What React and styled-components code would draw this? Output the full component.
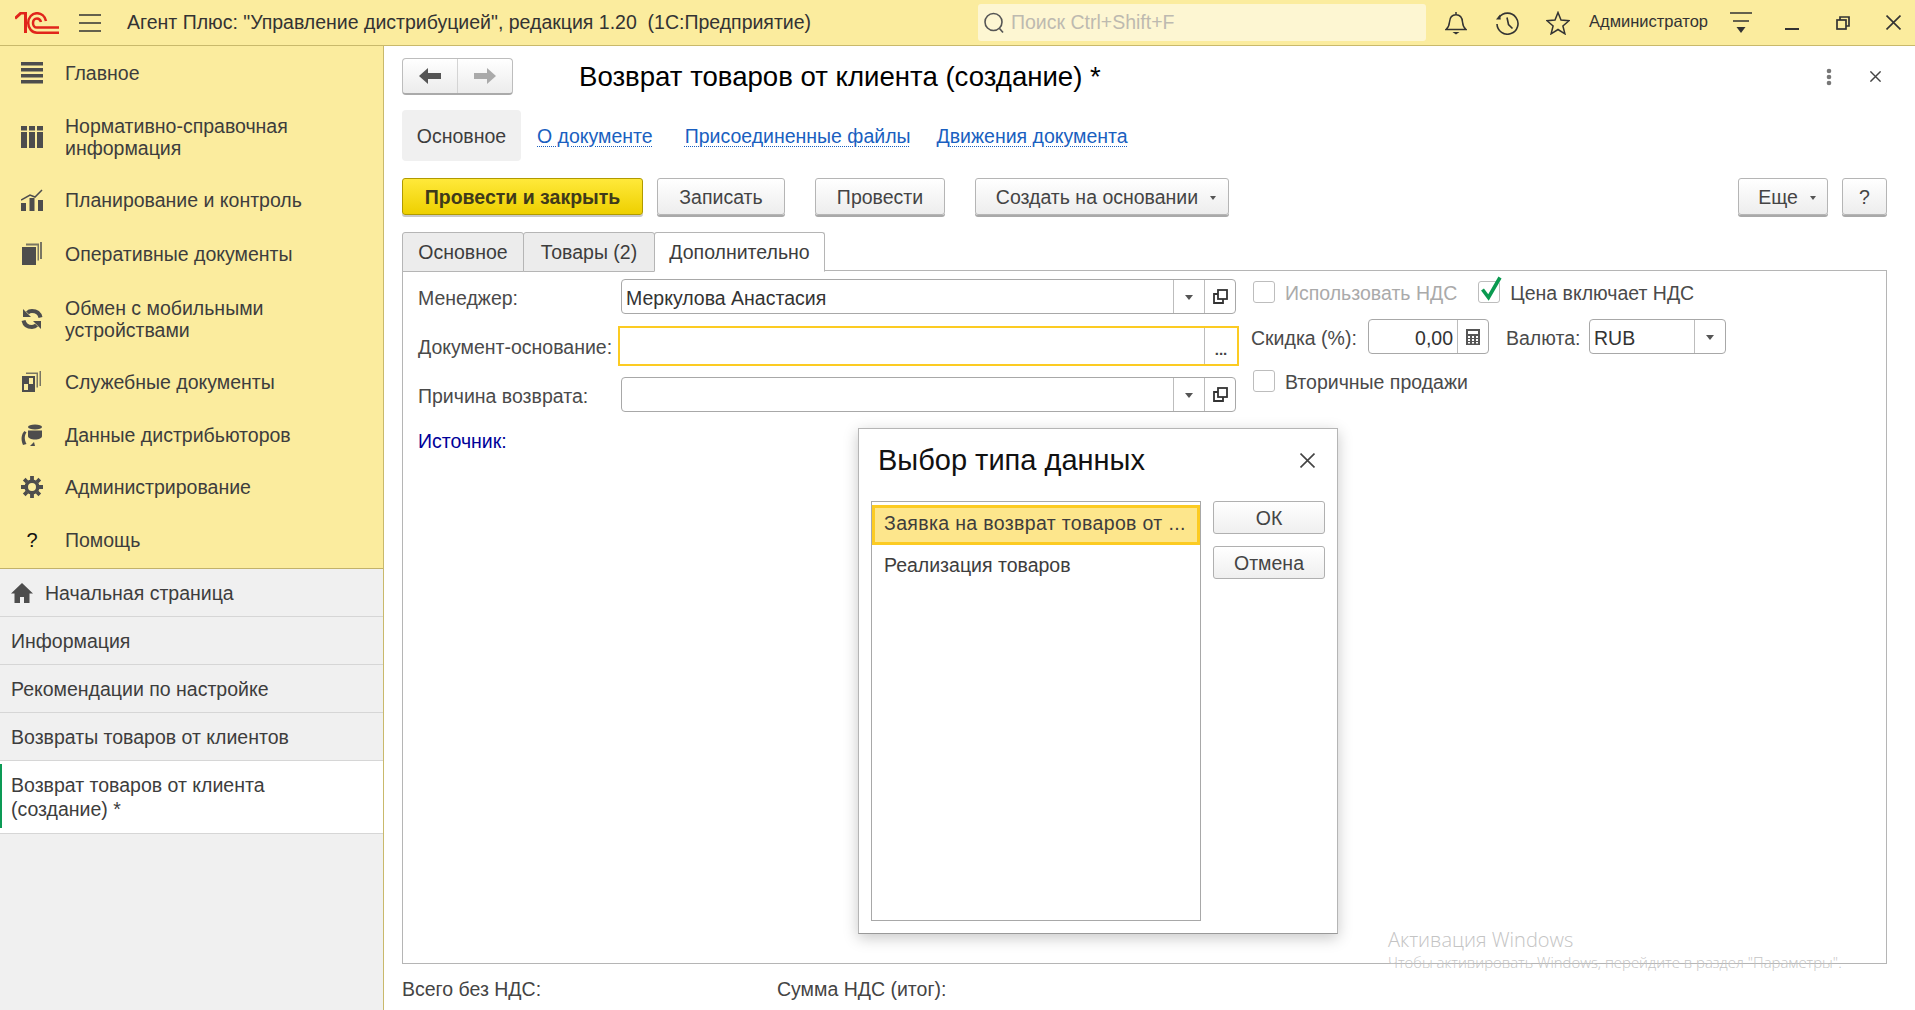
import React from 'react';
import styled, { createGlobalStyle } from 'styled-components';

const GlobalStyle = createGlobalStyle`
  html, body { margin: 0; padding: 0; height: 100%; background: #fff; overflow: hidden; }
  body { font-family: "Liberation Sans", Arial, sans-serif; font-size: 19.5px; color: #444; }
  #root { height: 100%; }
  * { box-sizing: border-box; }
`;

const Page = styled.div`
  position: relative;
  display: flex;
  flex-direction: column;
  width: 1915px;
  height: 1010px;
  overflow: hidden;
`;

const TopBar = styled.header`
  display: flex;
  align-items: center;
  height: 46px;
  flex: none;
  background: #fbec9e;
  border-bottom: 1px solid #c9b96b;
  color: #333;
  & > * { flex: none; }
`;

const LogoBox = styled.div`
  display: flex;
  width: 79px;
  padding-left: 15px;
`;

const BurgerBox = styled.div`
  display: flex;
  width: 48px;
`;

const AppTitle = styled.div`
  width: 851px;
  white-space: pre;
`;

const SearchBox = styled.div`
  display: flex;
  align-items: center;
  gap: 5px;
  width: 448px;
  height: 37px;
  padding-left: 4px;
  background: #fdf6d2;
  border-radius: 3px;
  color: #bdbab0;
`;

const TopIcons = styled.div`
  display: grid;
  grid-template-columns: repeat(3, 51px);
  justify-items: center;
  align-items: center;
  width: 163px;
  padding-left: 4px;
`;

const UserName = styled.div`
  width: 126px;
  font-size: 16.5px;
  margin-top: -3px;
`;

const WindowIcons = styled.div`
  display: grid;
  grid-template-columns: repeat(4, 51px);
  justify-items: center;
  align-items: center;
`;

const Body = styled.div`
  display: flex;
  flex: 1;
  min-height: 0;
`;

const Sidebar = styled.aside`
  display: flex;
  flex-direction: column;
  flex: none;
  width: 384px;
  background: #f0f0f0;
  border-right: 1px solid #c9b96b;
`;

const MainNav = styled.nav`
  height: 523px;
  padding-top: 1px;
  background: #fbec9e;
  border-bottom: 1px solid #c2b26a;
`;

const NavItem = styled.div`
  display: grid;
  grid-template-columns: 65px 1fr;
  align-items: center;
  padding: 15.3px 0;
  line-height: 22px;
  color: #3d3d3d;
`;

const NavIcon = styled.div`
  display: flex;
  justify-content: center;
  width: 64px;
  color: #4d4d4d;
`;

const OpenTab = styled.div`
  position: relative;
  display: flex;
  align-items: center;
  gap: 12px;
  height: ${(p) => (p.$active ? '73px' : '48px')};
  padding: 0 50px 0 11px;
  line-height: 24px;
  color: #3d3d3d;
  background: ${(p) => (p.$active ? '#fff' : 'transparent')};
  border-bottom: 1px solid #d6d6d6;

  ${(p) => p.$active && `
    &::before {
      content: '';
      position: absolute;
      left: 0;
      top: 3px;
      bottom: 5px;
      width: 2px;
      background: #0c9a55;
    }
  `}
`;

const Main = styled.main`
  display: flex;
  flex-direction: column;
  flex: 1;
  min-width: 0;
  padding: 12px 28px 0 18px;
`;

const HeaderRow = styled.div`
  display: flex;
  align-items: center;
  height: 37px;
`;

const NavButtons = styled.div`
  display: flex;
  width: 111px;
  height: 37px;
  background: linear-gradient(#fff, #ececec);
  border: 1px solid #bdbdbd;
  border-bottom: 2px solid #aaa;
  border-radius: 4px;
`;

const NavArrow = styled.div`
  display: flex;
  flex: 1;
  align-items: center;
  justify-content: center;
  & + & { border-left: 1px solid #d4d4d4; }
`;

const FormTitle = styled.h1`
  flex: 1;
  margin: 0 0 0 66px;
  font-size: 27.6px;
  font-weight: normal;
  color: #000;
`;

const HeaderTools = styled.div`
  display: flex;
  align-items: center;
  gap: 38px;
  padding-right: 6px;
`;

const SectionTabs = styled.div`
  display: flex;
  align-items: center;
  margin-top: 15px;
  height: 51px;
`;

const SectionTab = styled.div`
  display: flex;
  align-items: center;
  justify-content: center;
  width: 119px;
  height: 51px;
  padding-top: 2px;
  background: #f0f0f0;
  border-radius: 4px;
  color: #3d3d3d;
`;

const SectionLink = styled.a`
  margin-left: ${(p) => p.$gap}px;
  padding-top: 2px;
  color: #1a5fc0;
  text-decoration: underline dotted 1px;
  text-underline-offset: 3px;
`;

const CommandBar = styled.div`
  display: flex;
  align-items: flex-start;
  margin-top: 17px;
  height: 39px;
`;

const Button = styled.button`
  display: flex;
  align-items: center;
  justify-content: center;
  gap: 12px;
  width: ${(p) => p.$w}px;
  height: 37px;
  margin-left: ${(p) => p.$gap || 0}px;
  padding: 1px 0 0 ${(p) => (p.$menu ? 8 : 0)}px;
  font: inherit;
  color: #444;
  background: linear-gradient(#fff, #ededed);
  border: 1px solid #b5b5b5;
  border-radius: 3px;
  box-shadow: 0 2px 0 #a9a9a9;
`;

const PrimaryButton = styled(Button)`
  font-weight: bold;
  color: #3f3a1a;
  background: linear-gradient(#ffe93a, #eed000);
  border: 1px solid #b09a00;
  box-shadow: 0 2px 0 #c9c9c9;
`;

const Spacer = styled.div`
  flex: 1;
`;

const Caret = styled.span`
  width: 0;
  height: 0;
  margin-top: 2px;
  border-left: 4px solid transparent;
  border-right: 4px solid transparent;
  border-top: 5px solid #555;
`;

const SmallCaret = styled(Caret)`
  border-left-width: 3px;
  border-right-width: 3px;
  border-top-width: 4px;
`;

const PageTabs = styled.div`
  display: flex;
  margin-top: 15px;
  height: 39px;
  margin-bottom: -1px;
`;

const PageTab = styled.div`
  position: relative;
  display: flex;
  align-items: center;
  justify-content: center;
  width: ${(p) => p.$w}px;
  height: 40px;
  color: #3d3d3d;
  background: ${(p) => (p.$active ? '#fff' : '#ececec')};
  border: 1px solid #b5b5b5;
  border-bottom: ${(p) => (p.$active ? '1px solid #fff' : '1px solid #b5b5b5')};
  margin-left: ${(p) => (p.$first ? 0 : -1)}px;
  border-radius: 3px 3px 0 0;
  z-index: ${(p) => (p.$active ? 1 : 0)};
`;

const Panel = styled.section`
  display: flex;
  flex: 1;
  min-height: 0;
  gap: 13px;
  padding: 8px 0 0 15px;
  border: 1px solid #b5b5b5;
`;

const LeftForm = styled.div`
  display: flex;
  flex-direction: column;
  gap: 11px;
  width: 820px;
`;

const FormRow = styled.div`
  display: grid;
  grid-template-columns: 203px 615px;
  align-items: center;
  height: ${(p) => (p.$focused ? 40 : 35)}px;
  margin-top: ${(p) => (p.$focused ? 1 : 0)}px;
`;

const Label = styled.label`
  white-space: nowrap;
  color: #4a4a4a;
  width: ${(p) => (p.$w ? `${p.$w}px` : 'auto')};
  margin-left: ${(p) => p.$gap || 0}px;
  padding-top: ${(p) => (p.$tight ? 2 : 3)}px;
`;

const Field = styled.div`
  display: flex;
  align-items: stretch;
  width: ${(p) => (p.$w ? `${p.$w}px` : '100%')};
  height: 35px;
  background: #fff;
  border: 1px solid #a8a8a8;
  border-radius: 4px;
`;

const FocusField = styled(Field)`
  width: 621px;
  height: 40px;
  margin-left: -3px;
  border: 2px solid #fccb22;
  border-radius: 0;
`;

const FieldValue = styled.div`
  flex: 1;
  min-width: 0;
  padding: 2px 4px 0;
  line-height: 33px;
  color: #333;
  text-align: ${(p) => p.$align || 'left'};
`;

const FieldButton = styled.div`
  display: flex;
  flex: none;
  align-items: center;
  justify-content: center;
  width: ${(p) => p.$w || 31}px;
  border-left: 1px solid #bdbdbd;
  color: #444;
`;

const SourceLabel = styled.div`
  margin-top: 5px;
  padding-top: 2px;
  line-height: 23px;
  color: #000099;
`;

const RightForm = styled.div`
  display: flex;
  flex-direction: column;
  padding-top: 2px;
`;

const RightRow = styled.div`
  display: flex;
  align-items: center;
  height: ${(p) => p.$h}px;
  margin-top: ${(p) => p.$top || 0}px;
`;

const Check = styled.span`
  position: relative;
  flex: none;
  width: 22px;
  height: 22px;
  margin-left: ${(p) => p.$gap || 2}px;
  background: #fff;
  border: 1px solid #bdbdbd;
  border-radius: 3px;
`;

const CheckMark = styled.svg`
  position: absolute;
  left: 2px;
  top: -6px;
`;

const CheckText = styled.span`
  margin-left: 10px;
  padding-top: 2px;
  color: ${(p) => (p.$off ? '#aaa' : '#4a4a4a')};
  white-space: nowrap;
`;

const Footer = styled.footer`
  display: flex;
  align-items: center;
  flex: none;
  height: 46px;
  padding-top: 5px;
  color: #444;
`;

const FooterCell = styled.div`
  width: ${(p) => p.$w}px;
`;

const Dialog = styled.div`
  position: absolute;
  left: 858px;
  top: 428px;
  width: 480px;
  height: 506px;
  padding: 0 12px;
  background: #fff;
  border: 1px solid #b5b5b5;
  border-bottom-color: #999;
  box-shadow: 0 4px 14px rgba(0, 0, 0, 0.22);
`;

const DialogHead = styled.div`
  display: flex;
  align-items: center;
  justify-content: space-between;
  height: 72px;
  padding: 0 10px 10px 7px;
`;

const DialogTitle = styled.div`
  font-size: 29px;
  color: #111;
`;

const DialogBody = styled.div`
  display: flex;
  gap: 12px;
`;

const TypeList = styled.div`
  width: 331px;
  height: 420px;
  padding-top: 3px;
  border: 1px solid #a8a8a8;
`;

const TypeRow = styled.div`
  height: ${(p) => (p.$selected ? 40 : 42)}px;
  padding: 0 10px 0 ${(p) => (p.$selected ? 9 : 12)}px;
  line-height: ${(p) => (p.$selected ? 31 : 40)}px;
  letter-spacing: ${(p) => (p.$selected ? '0.35px' : '0')};
  color: #3d3d3d;
  background: ${(p) => (p.$selected ? '#fde68c' : 'transparent')};
  border: ${(p) => (p.$selected ? '3px solid #fccb22' : 'none')};
  white-space: pre;
`;

const DialogButtons = styled.div`
  display: flex;
  flex-direction: column;
  gap: 12px;
`;

const DialogButton = styled.button`
  width: 112px;
  height: 33px;
  padding: 2px 0 0;
  font: inherit;
  color: #444;
  background: linear-gradient(#fff, #efefef);
  border: 1px solid #b0b0b0;
  border-radius: 3px;
`;

const Watermark = styled.div`
  position: absolute;
  left: 1388px;
  top: 926px;
  font-family: "Open Sans", sans-serif;
  font-weight: 300;
  color: #c4c4c4;
  white-space: nowrap;
  pointer-events: none;
`;

const WatermarkTitle = styled.div`
  font-size: 20px;
  line-height: 28px;
`;

const WatermarkNote = styled.div`
  font-size: 14.9px;
  line-height: 20px;
  margin-top: -2px;
`;

const Logo = () => (
  <svg width="44" height="22" viewBox="0 0 44 22" fill="none" stroke="#e1251b" strokeWidth="2.500">
    <path d="M0 6.500L6 1h4.500v20" strokeWidth="3" />
    <path d="M31 9C30 4 26 1.2 22 1.2 17 1.2 13.2 5.500 13.2 11s3.800 9.700 8.800 9.700h22" />
    <path d="M26 10c-.6-2.300-2-3.600-4-3.600-2.600 0-4 2.300-4 4.600s1.400 4.600 4 4.600h22" />
  </svg>
);

const Burger = () => (
  <svg width="22" height="20" viewBox="0 0 22 20" stroke="#333" strokeWidth="1.5">
    <path d="M0 2h22M0 10h22M0 18h22" />
  </svg>
);

const Magnifier = () => (
  <svg width="24" height="26" viewBox="0 0 24 26" fill="none" stroke="#555" strokeWidth="1.6">
    <circle cx="11.500" cy="12" r="8.500" />
    <path d="M17.500 18.500l3.500 4" />
  </svg>
);

const Bell = () => (
  <svg width="22" height="24" viewBox="0 0 22 24" fill="none" stroke="#333" strokeWidth="1.5">
    <path d="M1 18.500c2.500-2 3.200-4 3.500-7.500C4.800 6.500 7 3.700 11 3.700s6.200 2.800 6.500 7.300c.3 3.500 1 5.500 3.500 7.500z" />
    <path d="M11 1v2.500" />
    <path d="M7.500 21h7l-3.500 2.500z" fill="#333" stroke="none" />
  </svg>
);

const History = () => (
  <svg width="24" height="24" viewBox="0 0 24 24" fill="none" stroke="#333" strokeWidth="1.6">
    <path d="M4 6.500A10.500 10.500 0 1 1 2 13" />
    <path d="M1 8.500l4.800 0-.8-5z" fill="#333" stroke="none" />
    <path d="M12 6.500l1.500 7 4 4" />
  </svg>
);

const Star = () => (
  <svg width="24" height="24" viewBox="0 0 24 24" fill="none" stroke="#333" strokeWidth="1.5">
    <path d="M12 1.500l3 7.600 8 .6-6.100 5.200 2 7.900L12 18.500l-6.900 4.300 2-7.900L1 9.700l8-.6z" />
  </svg>
);

const Funnel = () => (
  <svg width="22" height="24" viewBox="0 0 22 24" stroke="#333" strokeWidth="1.4">
    <path d="M0 2h22M3 10h16" />
    <path d="M6.500 16h9L11 22z" fill="#333" stroke="none" />
  </svg>
);

const Minimize = () => (
  <svg width="14" height="16" viewBox="0 0 14 16" stroke="#333" strokeWidth="2">
    <path d="M0 14h14" />
  </svg>
);

const Restore = () => (
  <svg width="14" height="14" viewBox="0 0 14 14" fill="none" stroke="#333" strokeWidth="1.700">
    <rect x="1" y="4" width="9" height="9" />
    <path d="M4 4V1h9v9h-3" />
  </svg>
);

const Cross = ({ size = 14, color = '#333', width = 1.500 }) => (
  <svg width={size} height={size} viewBox="0 0 14 14" stroke={color} strokeWidth={width}>
    <path d="M.5.5l13 13M13.500.5l-13 13" />
  </svg>
);

const Dots = () => (
  <svg width="6" height="18" viewBox="0 0 6 18" fill="#777">
    <circle cx="3" cy="3" r="2.300" />
    <circle cx="3" cy="9" r="2.300" />
    <circle cx="3" cy="15" r="2.300" />
  </svg>
);

const BackArrow = ({ color }) => (
  <svg width="22" height="16" viewBox="0 0 22 16" fill={color}>
    <path d="M0 8l9-8v5h13v6H9v5z" />
  </svg>
);

const ForwardArrow = ({ color }) => (
  <svg width="22" height="16" viewBox="0 0 22 16" fill={color}>
    <path d="M22 8l-9-8v5H0v6h13v5z" />
  </svg>
);

const ListIcon = () => (
  <svg width="22" height="22" viewBox="0 0 22 22" fill="currentColor">
    <path d="M0 0h22v3.500H0zM0 6h22v3.500H0zM0 12h22v3.500H0zM0 18h22v3.500H0z" />
  </svg>
);

const BooksIcon = () => (
  <svg width="22" height="22" viewBox="0 0 22 22" fill="currentColor">
    <path d="M0 0h6v4.500H0zM8 0h6v4.500H8zM16 0h6v4.500h-6zM0 6h6v16H0zM8 6h6v16H8zM16 6h6v16h-6z" />
  </svg>
);

const ChartIcon = () => (
  <svg width="22" height="22" viewBox="0 0 22 22" fill="currentColor">
    <path d="M0 14h5v8H0zM8.500 9h5v13h-5zM17 11h5v11h-5z" />
    <path d="M0 11l9-5 5 2 7-7" fill="none" stroke="currentColor" strokeWidth="1.500" />
  </svg>
);

const DocsIcon = () => (
  <svg width="22" height="24" viewBox="0 0 22 24" fill="currentColor">
    <path d="M1 5h14v18H1z" />
    <path d="M5 3.500V1.500h13v17h-1.500V3.500zM19 0h2v17h-2z" opacity=".75" />
  </svg>
);

const SyncIcon = () => (
  <svg width="22" height="24" viewBox="0 0 22 24" fill="none" stroke="currentColor" strokeWidth="4">
    <path d="M19.500 10.500C18.500 6 15 4 11 4c-2 0-3.500.7-4.500 1.800" />
    <path d="M2.500 13.500C3.500 18 7 20 11 20c2 0 3.500-.7 4.500-1.800" />
    <path d="M2 2v8h8z" fill="currentColor" stroke="none" />
    <path d="M20 22v-8h-8z" fill="currentColor" stroke="none" />
  </svg>
);

const ServiceDocsIcon = () => (
  <svg width="22" height="22" viewBox="0 0 22 22" fill="currentColor">
    <path d="M5 3V1.500h12v15h-1.500V3zM18.500 0H20v15h-1.500z" opacity=".75" />
    <path fillRule="evenodd" d="M1 5h13v16H1zM8 7v6h4V7zM3 13v6h4v-6z" />
  </svg>
);

const DistributorIcon = () => (
  <svg width="24" height="22" viewBox="0 0 24 22" fill="currentColor">
    <ellipse cx="15" cy="3" rx="7" ry="2.500" />
    <path d="M8 6.500h14V12c0 2-3 3.500-7 3.500S8 14 8 12z" />
    <path d="M4.500 7C1.500 10 .5 15 3 21l3.500-1C4 15 4.500 11 6.500 8.500z" />
    <path d="M10 22l4-4 1 4z" />
  </svg>
);

const GearIcon = () => (
  <svg width="22" height="22" viewBox="0 0 22 22" fill="none" stroke="currentColor">
    <circle cx="11" cy="11" r="5.800" strokeWidth="3.600" />
    <path strokeWidth="3.800" d="M11 0v4M11 18v4M0 11h4M18 11h4M3.200 3.200l2.800 2.800M16 16l2.800 2.800M18.800 3.200L16 6M6 16l-2.800 2.800" />
  </svg>
);

const HelpMark = styled.span`
  color: #111;
  font-size: 20px;
`;

const HomeIcon = () => (
  <svg width="22" height="20" viewBox="0 0 22 20" fill="#4d4d4d">
    <path d="M11 0L0 10.500h3.500V20h5.500v-6h4v6h5.500v-9.500H22z" />
  </svg>
);

const LinkIcon = () => (
  <svg width="15" height="15" viewBox="0 0 15 15" fill="none" stroke="#333" strokeWidth="1.800">
    <rect x="5" y="1" width="9" height="9" />
    <path d="M5 5H1v9h9v-4" />
  </svg>
);

const CalcIcon = () => (
  <svg width="14" height="16" viewBox="0 0 14 16">
    <path d="M0 0h14v16H0z" fill="#555" />
    <path d="M2 2h10v3H2z" fill="#fff" />
    <path d="M2 7h2v2H2zM6 7h2v2H6zM10 7h2v2h-2zM2 10h2v2H2zM6 10h2v2H6zM10 10h2v2h-2zM2 13h2v1.500H2zM6 13h2v1.500H6zM10 13h2v1.500h-2z" fill="#fff" />
  </svg>
);

const GreenCheck = () => (
  <CheckMark width="22" height="25" viewBox="0 0 22 25" fill="none" stroke="#0a9a50" strokeWidth="3.600">
    <path d="M1.500 13.500l6 8L19 1.500" />
  </CheckMark>
);

const DotsText = styled.span`
  font-weight: bold;
  font-size: 15px;
  margin-top: 6px;
`;

const navItems = [
  { icon: <ListIcon />, text: 'Главное' },
  { icon: <BooksIcon />, text: 'Нормативно-справочная информация' },
  { icon: <ChartIcon />, text: 'Планирование и контроль' },
  { icon: <DocsIcon />, text: 'Оперативные документы' },
  { icon: <SyncIcon />, text: 'Обмен с мобильными устройствами' },
  { icon: <ServiceDocsIcon />, text: 'Служебные документы' },
  { icon: <DistributorIcon />, text: 'Данные дистрибьюторов' },
  { icon: <GearIcon />, text: 'Администрирование' },
  { icon: <HelpMark>?</HelpMark>, text: 'Помощь' },
];

const openTabs = ['Информация', 'Рекомендации по настройке', 'Возвраты товаров от клиентов'];

const App = () => (
  <Page>
    <GlobalStyle />
    <TopBar>
      <LogoBox><Logo /></LogoBox>
      <BurgerBox><Burger /></BurgerBox>
      <AppTitle>{'Агент Плюс: "Управление дистрибуцией", редакция 1.20  (1С:Предприятие)'}</AppTitle>
      <SearchBox>
        <Magnifier />
        Поиск Ctrl+Shift+F
      </SearchBox>
      <TopIcons>
        <Bell />
        <History />
        <Star />
      </TopIcons>
      <UserName>Администратор</UserName>
      <WindowIcons>
        <Funnel />
        <Minimize />
        <Restore />
        <Cross size={15} />
      </WindowIcons>
    </TopBar>
    <Body>
      <Sidebar>
        <MainNav>
          {navItems.map((item) => (
            <NavItem key={item.text}>
              <NavIcon>{item.icon}</NavIcon>
              <div>{item.text}</div>
            </NavItem>
          ))}
        </MainNav>
        <OpenTab>
          <HomeIcon />
          Начальная страница
        </OpenTab>
        {openTabs.map((tab) => (
          <OpenTab key={tab}>{tab}</OpenTab>
        ))}
        <OpenTab $active>Возврат товаров от клиента (создание) *</OpenTab>
      </Sidebar>
      <Main>
        <HeaderRow>
          <NavButtons>
            <NavArrow><BackArrow color="#555" /></NavArrow>
            <NavArrow><ForwardArrow color="#aaa" /></NavArrow>
          </NavButtons>
          <FormTitle>Возврат товаров от клиента (создание) *</FormTitle>
          <HeaderTools>
            <Dots />
            <Cross size={11} color="#444" width={1.800} />
          </HeaderTools>
        </HeaderRow>
        <SectionTabs>
          <SectionTab>Основное</SectionTab>
          <SectionLink $gap={16}>О документе</SectionLink>
          <SectionLink $gap={32}>Присоединенные файлы</SectionLink>
          <SectionLink $gap={26}>Движения документа</SectionLink>
        </SectionTabs>
        <CommandBar>
          <PrimaryButton $w={241}>Провести и закрыть</PrimaryButton>
          <Button $w={128} $gap={14}>Записать</Button>
          <Button $w={130} $gap={30}>Провести</Button>
          <Button $w={254} $gap={30} $menu>Создать на основании <SmallCaret /></Button>
          <Spacer />
          <Button $w={90} $menu>Еще <SmallCaret /></Button>
          <Button $w={45} $gap={14}>?</Button>
        </CommandBar>
        <PageTabs>
          <PageTab $w={122} $first>Основное</PageTab>
          <PageTab $w={132}>Товары (2)</PageTab>
          <PageTab $w={171} $active>Дополнительно</PageTab>
        </PageTabs>
        <Panel>
          <LeftForm>
            <FormRow>
              <Label>Менеджер:</Label>
              <Field>
                <FieldValue>Меркулова Анастасия</FieldValue>
                <FieldButton><Caret /></FieldButton>
                <FieldButton><LinkIcon /></FieldButton>
              </Field>
            </FormRow>
            <FormRow $focused>
              <Label $tight>Документ-основание:</Label>
              <FocusField>
                <FieldValue />
                <FieldButton $w={33}><DotsText>...</DotsText></FieldButton>
              </FocusField>
            </FormRow>
            <FormRow>
              <Label>Причина возврата:</Label>
              <Field>
                <FieldValue />
                <FieldButton><Caret /></FieldButton>
                <FieldButton><LinkIcon /></FieldButton>
              </Field>
            </FormRow>
            <SourceLabel>Источник:</SourceLabel>
          </LeftForm>
          <RightForm>
            <RightRow $h={22}>
              <Check />
              <CheckText $off>Использовать НДС</CheckText>
              <Check $gap={21}><GreenCheck /></Check>
              <CheckText>Цена включает НДС</CheckText>
            </RightRow>
            <RightRow $h={35} $top={16}>
              <Label $w={117}>Скидка (%):</Label>
              <Field $w={121}>
                <FieldValue $align="right">0,00</FieldValue>
                <FieldButton><CalcIcon /></FieldButton>
              </Field>
              <Label $w={83} $gap={17}>Валюта:</Label>
              <Field $w={137}>
                <FieldValue>RUB</FieldValue>
                <FieldButton><Caret /></FieldButton>
              </Field>
            </RightRow>
            <RightRow $h={22} $top={16}>
              <Check />
              <CheckText>Вторичные продажи</CheckText>
            </RightRow>
          </RightForm>
        </Panel>
        <Footer>
          <FooterCell $w={375}>Всего без НДС:</FooterCell>
          <FooterCell $w={300}>Сумма НДС (итог):</FooterCell>
        </Footer>
      </Main>
    </Body>
    <Dialog>
      <DialogHead>
        <DialogTitle>Выбор типа данных</DialogTitle>
        <Cross size={15} color="#444" />
      </DialogHead>
      <DialogBody>
        <TypeList>
          <TypeRow $selected>Заявка на возврат товаров от ...</TypeRow>
          <TypeRow>Реализация товаров</TypeRow>
        </TypeList>
        <DialogButtons>
          <DialogButton>ОК</DialogButton>
          <DialogButton>Отмена</DialogButton>
        </DialogButtons>
      </DialogBody>
    </Dialog>
    <Watermark>
      <WatermarkTitle>Активация Windows</WatermarkTitle>
      <WatermarkNote>Чтобы активировать Windows, перейдите в раздел "Параметры".</WatermarkNote>
    </Watermark>
  </Page>
);

export default App;
